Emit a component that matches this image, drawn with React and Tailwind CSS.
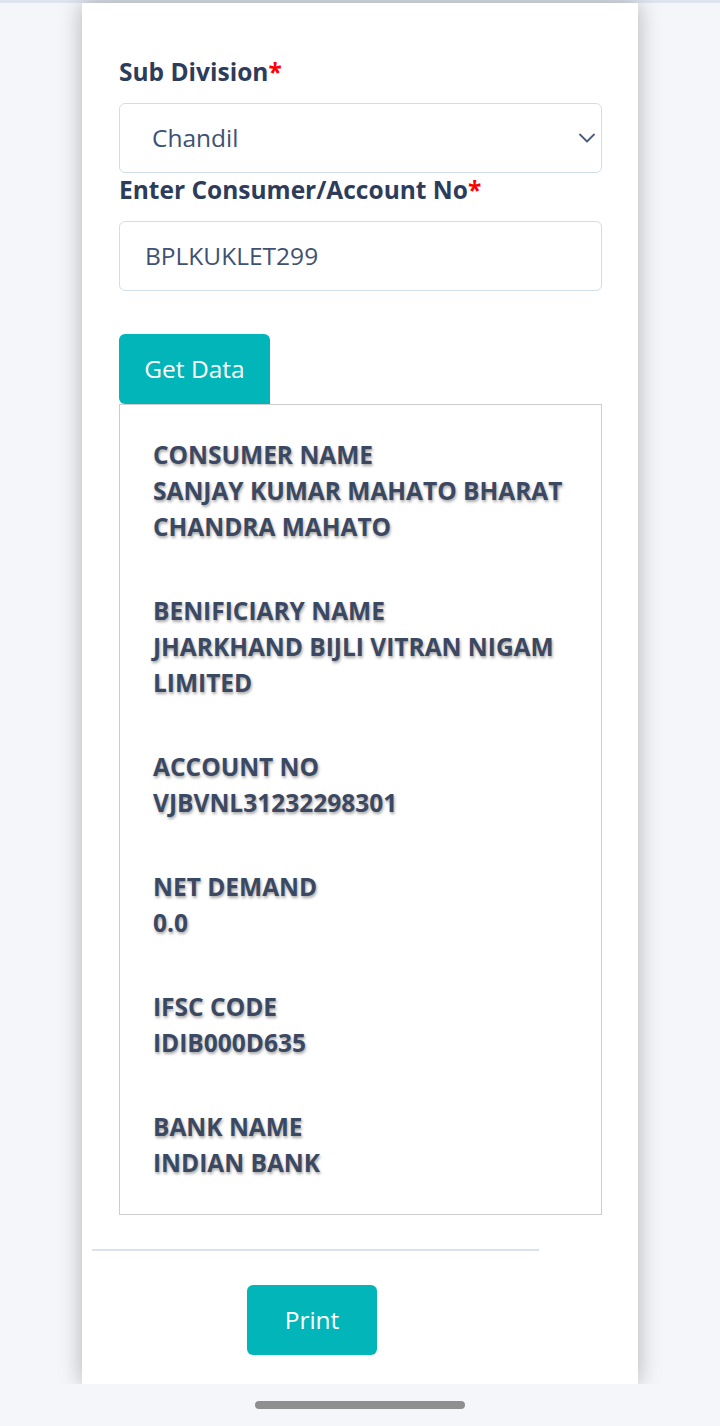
const fields = [
  { label: "CONSUMER NAME", value: "SANJAY KUMAR MAHATO BHARAT CHANDRA MAHATO" },
  { label: "BENIFICIARY NAME", value: "JHARKHAND BIJLI VITRAN NIGAM LIMITED" },
  { label: "ACCOUNT NO", value: "VJBVNL31232298301" },
  { label: "NET DEMAND", value: "0.0" },
  { label: "IFSC CODE", value: "IDIB000D635" },
  { label: "BANK NAME", value: "INDIAN BANK" },
];

export default function App() {
  return (
    <div
      className="w-[720px] h-[1426px] bg-[#f4f6fa] flex flex-col overflow-hidden"
      style={{ fontFamily: "'Open Sans', 'Noto Sans', sans-serif" }}
    >
      <div className="h-[3px] bg-[#dfe5ee] shrink-0"></div>

      {/* card */}
      <div className="w-[556px] mx-auto flex-1 bg-white shadow-[0_0_22px_rgba(0,0,0,0.28)] flex flex-col">
        <div className="pl-[37px] pr-[36px] pt-[52px]">
          <label className="block text-[24.5px] font-bold text-[#2d3c5a] leading-[34px]">
            Sub Division<span className="text-[#ff0000]">*</span>
          </label>
          <div className="mt-[14px] h-[70px] rounded-[6px] border border-[#d3dcea] flex items-center justify-between pl-[32px] pr-[6px]">
            <span className="text-[24.5px] text-[#3e5172]">Chandil</span>
            <svg width="16" height="10" viewBox="0 0 16 10" fill="none" stroke="#4a5c7e" strokeWidth="1.8" strokeLinecap="round" strokeLinejoin="round">
              <path d="M1 1.5l7 7 7-7" />
            </svg>
          </div>

          <label className="block text-[24.5px] font-bold text-[#2d3c5a] leading-[34px]">
            Enter Consumer/Account No<span className="text-[#ff0000]">*</span>
          </label>
          <div className="mt-[14px] h-[70px] rounded-[6px] border border-[#d3dcea] flex items-center pl-[25px]">
            <span className="text-[24.5px] text-[#3e5172]">BPLKUKLET299</span>
          </div>

          <button className="mt-[43px] w-[151px] h-[70px] rounded-t-[6px] rounded-bl-[6px] bg-[#02b5b9] text-white text-[24.5px] block">
            Get Data
          </button>

          <div className="border border-[#cdcdcd] pl-[33px] pr-[20px] pt-[32px] pb-[33px] flex flex-col gap-[48px]">
            {fields.map((f) => (
              <div
                key={f.label}
                className="text-[24.5px] font-bold leading-[36px] text-[#3b4862] [text-shadow:1px_2px_3px_rgba(0,0,0,0.35)]"
              >
                <div>{f.label}</div>
                <div>{f.value}</div>
              </div>
            ))}
          </div>
        </div>

        <div className="ml-[10px] w-[447px] h-[2px] bg-[#dbe2ec] mt-[34px]"></div>

        <button className="ml-[165px] mt-[34px] w-[130px] h-[70px] rounded-[6px] bg-[#02b5b9] text-white text-[24.5px]">
          Print
        </button>
      </div>

      {/* bottom gesture bar */}
      <div className="h-[42px] shrink-0 bg-[#f5f6fa] flex items-center justify-center">
        <div className="w-[210px] h-[8px] rounded-full bg-[#8f8f8f]"></div>
      </div>
    </div>
  );
}
